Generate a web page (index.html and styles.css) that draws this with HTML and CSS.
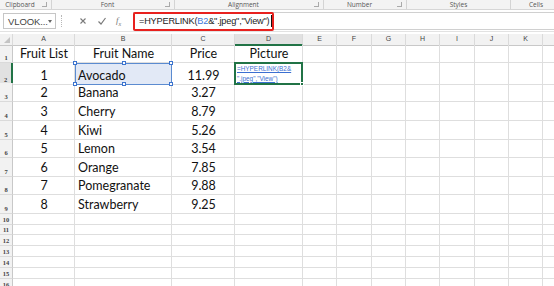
FILE: index.html
```html
<!DOCTYPE html>
<html>
<head>
<meta charset="utf-8">
<link rel="stylesheet" href="styles.css">
</head>
<body>
<div class="app">
  <div class="ribbon">
    <div class="grp g-clip"><span class="glabel">Clipboard</span><span class="launch"></span></div>
    <div class="grp g-font"><span class="glabel">Font</span><span class="launch"></span></div>
    <div class="grp g-align"><span class="glabel">Alignment</span><span class="launch"></span></div>
    <div class="grp g-num"><span class="glabel">Number</span><span class="launch"></span></div>
    <div class="grp g-styles"><span class="glabel">Styles</span></div>
    <div class="grp g-cells"><span class="glabel">Cells</span></div>
  </div>
  <div class="fbar">
    <div class="namebox"><span class="nb-text">VLOOK...</span><span class="nb-arrow"></span></div>
    <div class="fdots"></div>
    <div class="fbtns">
      <svg class="ficon" width="10" height="10" viewBox="0 0 10 10"><path d="M2.5 2.5 L7.5 7.5 M7.5 2.5 L2.5 7.5" stroke="#7a7a7a" stroke-width="1.1" fill="none"/></svg>
      <svg class="ficon" width="10" height="10" viewBox="0 0 10 10"><path d="M1.5 5.5 L4 8 L8.5 2" stroke="#7a7a7a" stroke-width="1.2" fill="none"/></svg>
      <span class="fx">f<sub>x</sub></span>
    </div>
    <div class="finput">
      <div class="fhl"><span>=HYPERLINK(</span><span class="ref">B2</span><span>&amp;".jpeg","View")</span><span class="caret"></span></div>
    </div>
  </div>
  <div class="sheet">
    <div class="row r-head">
      <div class="hc corner"><span class="tri"></span></div>
      <div class="hc">A</div><div class="hc">B</div><div class="hc">C</div><div class="hc hc-sel">D</div><div class="hc">E</div><div class="hc">F</div><div class="hc">G</div><div class="hc">H</div><div class="hc">I</div><div class="hc">J</div><div class="hc">K</div><div class="hc"></div>
    </div>
    <div class="row r18">
      <div class="rh">1</div>
      <div class="c ctr">Fruit List</div><div class="c ctr">Fruit Name</div><div class="c ctr">Price</div><div class="c ctr">Picture</div><div class="c"></div><div class="c"></div><div class="c"></div><div class="c"></div><div class="c"></div><div class="c"></div><div class="c"></div><div class="c"></div>
    </div>
    <div class="row r20">
      <div class="rh rh-sel">2</div>
      <div class="c ctr">1</div>
      <div class="c sel-blue">Avocado<i class="h h-tl"></i><i class="h h-tm"></i><i class="h h-tr"></i><i class="h h-bl"></i><i class="h h-bm"></i><i class="h h-br"></i></div>
      <div class="c ctr">11.99</div>
      <div class="c sel-green"><div class="link">=HYPERLINK(B2&amp;<br>".jpeg","View")</div><i class="fill"></i></div>
      <div class="c"></div><div class="c"></div><div class="c"></div><div class="c"></div><div class="c"></div><div class="c"></div><div class="c"></div><div class="c"></div>
    </div>
    <div class="row r19">
      <div class="rh">3</div>
      <div class="c ctr">2</div><div class="c">Banana</div><div class="c ctr">3.27</div><div class="c"></div><div class="c"></div><div class="c"></div><div class="c"></div><div class="c"></div><div class="c"></div><div class="c"></div><div class="c"></div><div class="c"></div>
    </div>
    <div class="row r19">
      <div class="rh">4</div>
      <div class="c ctr">3</div><div class="c">Cherry</div><div class="c ctr">8.79</div><div class="c"></div><div class="c"></div><div class="c"></div><div class="c"></div><div class="c"></div><div class="c"></div><div class="c"></div><div class="c"></div><div class="c"></div>
    </div>
    <div class="row r19">
      <div class="rh">5</div>
      <div class="c ctr">4</div><div class="c">Kiwi</div><div class="c ctr">5.26</div><div class="c"></div><div class="c"></div><div class="c"></div><div class="c"></div><div class="c"></div><div class="c"></div><div class="c"></div><div class="c"></div><div class="c"></div>
    </div>
    <div class="row r18">
      <div class="rh">6</div>
      <div class="c ctr">5</div><div class="c">Lemon</div><div class="c ctr">3.54</div><div class="c"></div><div class="c"></div><div class="c"></div><div class="c"></div><div class="c"></div><div class="c"></div><div class="c"></div><div class="c"></div><div class="c"></div>
    </div>
    <div class="row r19">
      <div class="rh">7</div>
      <div class="c ctr">6</div><div class="c">Orange</div><div class="c ctr">7.85</div><div class="c"></div><div class="c"></div><div class="c"></div><div class="c"></div><div class="c"></div><div class="c"></div><div class="c"></div><div class="c"></div><div class="c"></div>
    </div>
    <div class="row r18">
      <div class="rh">8</div>
      <div class="c ctr">7</div><div class="c">Pomegranate</div><div class="c ctr">9.88</div><div class="c"></div><div class="c"></div><div class="c"></div><div class="c"></div><div class="c"></div><div class="c"></div><div class="c"></div><div class="c"></div><div class="c"></div>
    </div>
    <div class="row r19">
      <div class="rh">9</div>
      <div class="c ctr">8</div><div class="c">Strawberry</div><div class="c ctr">9.25</div><div class="c"></div><div class="c"></div><div class="c"></div><div class="c"></div><div class="c"></div><div class="c"></div><div class="c"></div><div class="c"></div><div class="c"></div>
    </div>
    <div class="row r11"><div class="rh">10</div><div class="c"></div><div class="c"></div><div class="c"></div><div class="c"></div><div class="c"></div><div class="c"></div><div class="c"></div><div class="c"></div><div class="c"></div><div class="c"></div><div class="c"></div><div class="c"></div></div>
    <div class="row r10"><div class="rh">11</div><div class="c"></div><div class="c"></div><div class="c"></div><div class="c"></div><div class="c"></div><div class="c"></div><div class="c"></div><div class="c"></div><div class="c"></div><div class="c"></div><div class="c"></div><div class="c"></div></div>
    <div class="row r11"><div class="rh">12</div><div class="c"></div><div class="c"></div><div class="c"></div><div class="c"></div><div class="c"></div><div class="c"></div><div class="c"></div><div class="c"></div><div class="c"></div><div class="c"></div><div class="c"></div><div class="c"></div></div>
    <div class="row r11"><div class="rh">13</div><div class="c"></div><div class="c"></div><div class="c"></div><div class="c"></div><div class="c"></div><div class="c"></div><div class="c"></div><div class="c"></div><div class="c"></div><div class="c"></div><div class="c"></div><div class="c"></div></div>
    <div class="row r11"><div class="rh">14</div><div class="c"></div><div class="c"></div><div class="c"></div><div class="c"></div><div class="c"></div><div class="c"></div><div class="c"></div><div class="c"></div><div class="c"></div><div class="c"></div><div class="c"></div><div class="c"></div></div>
    <div class="row r11"><div class="rh">15</div><div class="c"></div><div class="c"></div><div class="c"></div><div class="c"></div><div class="c"></div><div class="c"></div><div class="c"></div><div class="c"></div><div class="c"></div><div class="c"></div><div class="c"></div><div class="c"></div></div>
    <div class="row r11"><div class="rh">16</div><div class="c"></div><div class="c"></div><div class="c"></div><div class="c"></div><div class="c"></div><div class="c"></div><div class="c"></div><div class="c"></div><div class="c"></div><div class="c"></div><div class="c"></div><div class="c"></div></div>
  </div>
</div>
</body>
</html>
```
FILE: styles.css
```css
* { box-sizing: border-box; }
html, body { margin: 0; padding: 0; background: #fff; }
body { width: 554px; height: 286px; overflow: hidden; }
.app { width: 554px; height: 286px; overflow: hidden; font-family: "Open Sans", "Liberation Sans", sans-serif; }

.ribbon {
  display: flex; height: 10px; background: #f3f3f3; border-bottom: 1px solid #d6d6d6;
  font-size: 6.5px; color: #555; line-height: 9px;
}
.grp { display: flex; align-items: center; border-right: 1px solid #d4d4d4; flex: none; }
.glabel { flex: 1; text-align: center; }
.launch { width: 5px; height: 5px; border: 1px solid #aaa; border-top: none; border-left: none; margin: 0 4px 0 2px; flex: none; }
.g-clip { width: 52px; }
.g-font { width: 123px; }
.g-align { width: 149px; }
.g-num { width: 83px; }
.g-styles { width: 104px; }
.g-cells { width: 50px; border-right: none; }

.fbar { display: flex; align-items: center; height: 22px; background: #fff; padding: 1px 0 0 3px; border-bottom: 1px solid #e2e2e2; }
.namebox {
  width: 53px; height: 16px; border: 1px solid #c6c6c6; display: flex; align-items: center; justify-content: space-between;
  padding: 0 3px 0 4px; font-size: 9.5px; color: #444; background: #fff;
  font-family: "Liberation Sans", sans-serif; letter-spacing: -0.1px;
}
.nb-arrow { width: 0; height: 0; border-left: 2.5px solid transparent; border-right: 2.5px solid transparent; border-top: 3px solid #666; }
.fdots { width: 1px; height: 12px; margin: 0 7px 0 5px; border-left: 1px dotted #b8b8b8; }
.fbtns { display: flex; align-items: center; gap: 9px; padding-left: 9px; width: 64px; height: 17px; }
.fx { font-family: "Liberation Serif", serif; font-style: italic; font-size: 9px; color: #777; }
.fx sub { font-size: 6px; }
.finput { flex: 1; height: 18px; display: flex; align-items: center; border: 1px solid #d0d0d0; border-right: none; }
.fhl {
  display: flex; align-items: center; height: 19px; width: 141px; border: 2px solid #e8211e; border-radius: 2px;
  padding-left: 4px; font-size: 9.2px; color: #222; font-family: "Liberation Sans", sans-serif;
  letter-spacing: -0.2px; white-space: pre; margin-left: -1px;
}
.ref { color: #3d78d8; }
.caret { width: 1px; height: 12px; background: #111; margin-left: 2px; }

.sheet { margin-top: 2px; }
.row { display: grid; grid-template-columns: 13px 62px 97px 63px 68px 34px 35px 34px 34px 35px 34px 34px 34px; }
.r-head { height: 11px; }
.r18 { height: 18px; }
.r19 { height: 19px; }
.r20 { height: 20px; }
.r11 { height: 11px; }
.r10 { height: 10px; }

.hc {
  background: #f2f2f2; border-right: 1px solid #dadada; border-bottom: 1px solid #c8c8c8;
  font-size: 7px; color: #444; text-align: center; line-height: 10px; font-family: "Liberation Sans", sans-serif;
}
.hc-sel { background: #e1e1e1; border-bottom: 2px solid #217346; }
.corner { position: relative; }
.tri { position: absolute; right: 2px; bottom: 2px; width: 0; height: 0; border-left: 6px solid transparent; border-bottom: 6px solid #c4c4c4; }

.rh {
  background: #f2f2f2; border-right: 1px solid #c8c8c8; border-bottom: 1px solid #dadada;
  font-size: 6.5px; color: #444; display: flex; align-items: flex-end; justify-content: center; padding-bottom: 1px;
  font-family: "Liberation Serif", serif; font-weight: bold;
}
.rh-sel { background: #e1e1e1; border-right: 2px solid #217346; }

.c {
  border-right: 1px solid #dedede; border-bottom: 1px solid #dedede;
  font-family: "Lato", sans-serif; font-size: 12.5px; color: #111;
  display: flex; align-items: flex-end; padding: 0 2px 0 3px; white-space: nowrap; overflow: visible;
  line-height: 15px; padding-bottom: 1px;
}
.ctr { justify-content: center; }
.sel-blue { position: relative; background: #e2e9f6; outline: 1px solid #5b8bd0; outline-offset: -1px; }
.h { position: absolute; width: 4px; height: 4px; background: #fff; border: 1px solid #3c74cf; }
.h-tl { left: -2px; top: -2px; }
.h-tm { left: 47px; top: -2px; }
.h-tr { right: -2px; top: -2px; }
.h-bl { left: -2px; bottom: -2px; }
.h-bm { left: 47px; bottom: -2px; }
.h-br { right: -2px; bottom: -2px; }
.sel-green { position: relative; border: 2px solid #217346; margin: -1px 0 0 -1px; padding: 0 0 0 1px; align-items: flex-start; }
.link { font-family: "Liberation Sans", sans-serif; font-size: 6.4px; line-height: 9.5px; color: #3b6fd1; text-decoration: underline; padding-top: 0; }
.fill { position: absolute; right: -3px; bottom: -3px; width: 4px; height: 4px; background: #217346; border: 1px solid #fff; }
```
